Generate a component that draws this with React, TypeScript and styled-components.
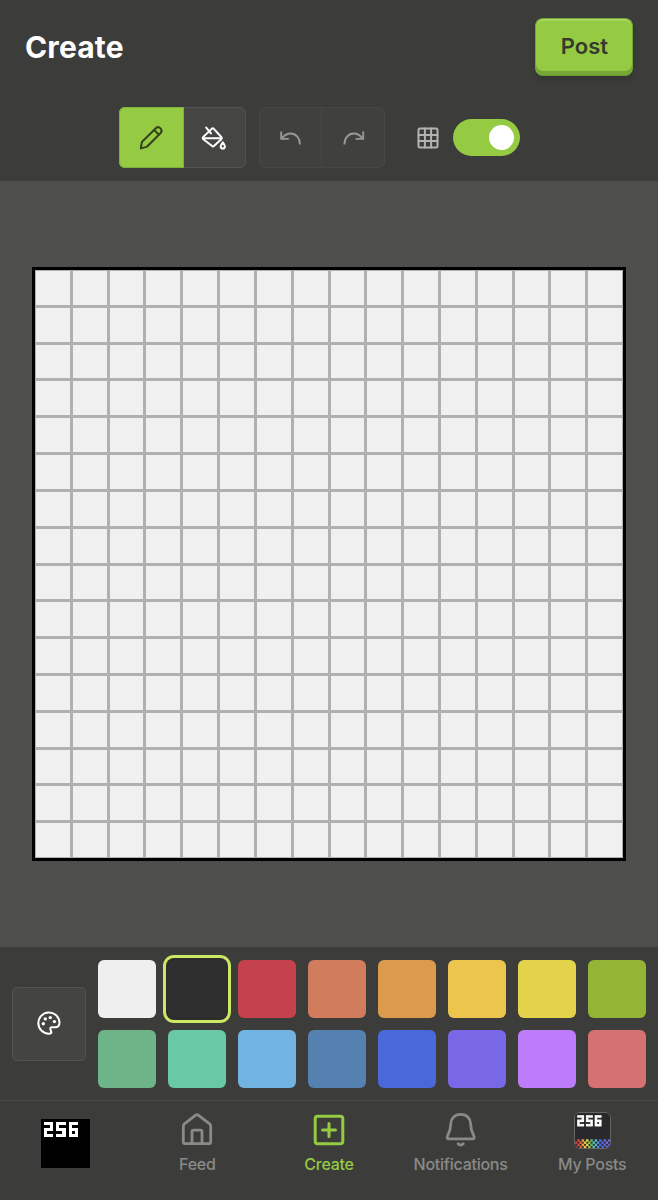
import React from "react";
import styled, { createGlobalStyle } from "styled-components";

const GlobalStyle = createGlobalStyle`
  *, *::before, *::after { box-sizing: border-box; }
  body {
    margin: 0;
    background: #3c3c3a;
    font-family: Inter, "Liberation Sans", sans-serif;
    -webkit-font-smoothing: antialiased;
  }
  button { font: inherit; padding: 0; margin: 0; cursor: pointer; }
`;

const Screen = styled.div`
  display: flex;
  flex-direction: column;
  height: 1200px;
  overflow: hidden;
  background: #3c3c3a;
`;

const Header = styled.header`
  display: flex;
  justify-content: space-between;
  align-items: flex-start;
  height: 107px;
  flex: none;
  padding: 18px 24.6px 0 25px;
`;

const Title = styled.h1`
  margin: 0;
  color: #fff;
  font-size: 30px;
  font-weight: 700;
  line-height: 58px;
  letter-spacing: 0.15px;
`;

const PostButton = styled.button`
  width: 98px;
  height: 58px;
  margin-top: 0.4px;
  padding-bottom: 2px;
  border: 1px solid #74a636;
  border-bottom-color: #6b9a33;
  border-radius: 8px;
  background: #94cb42;
  color: #363b2c;
  font-size: 22px;
  font-weight: 600;
  box-shadow: inset 0 1.5px 0 #b1da6f, inset 0 -4px 0 #75a637, 0 3px 5px rgba(0, 0, 0, 0.14);
`;

const Toolbar = styled.div`
  display: flex;
  align-items: flex-start;
  flex: none;
  height: 74px;
  padding-left: 119px;
`;

const ToolGroup = styled.div<{ $muted?: boolean }>`
  display: flex;
  height: 61px;
  width: ${(p) => (p.$muted ? "126px" : "127px")};
  margin-right: 13px;
  border: 1px solid ${(p) => (p.$muted ? "#474745" : "#535351")};
  border-radius: 6px;
  background: ${(p) => (p.$muted ? "#40403e" : "#454543")};
`;

const ToolButton = styled.button<{ $active?: boolean; $tone: string; $divided?: boolean }>`
  display: flex;
  flex: ${(p) => (p.$active ? "0 0 65px" : "1")};
  align-items: center;
  justify-content: center;
  margin: ${(p) => (p.$active ? "-1px 0 -1px -1px" : "0")};
  padding-right: ${(p) => (p.$divided ? "0" : "1px")};
  border: 0 solid #474745;
  border-right-width: ${(p) => (p.$divided ? "1px" : "0")};
  border-radius: ${(p) => (p.$active ? "6px 0 0 6px" : "0")};
  background: ${(p) => (p.$active ? "#94cb42" : "transparent")};
  box-shadow: ${(p) => (p.$active ? "inset 0 0 0 1px #7fb039" : "none")};
  color: ${(p) => p.$tone};
`;

const GridToggle = styled.div`
  display: flex;
  align-items: center;
  gap: 13.5px;
  height: 61px;
  margin-left: 19px;
  color: #b3b3b1;
`;

const Switch = styled.button`
  display: flex;
  align-items: center;
  justify-content: flex-end;
  width: 67.5px;
  height: 37px;
  padding-right: 6px;
  border: 0;
  border-radius: 19px;
  background: #94cb42;
`;

const Knob = styled.span`
  width: 25px;
  height: 25px;
  border-radius: 50%;
  background: #fff;
`;

const Stage = styled.main`
  display: flex;
  align-items: center;
  justify-content: center;
  flex: none;
  height: 766px;
  background: #4e4e4c;
`;

const Board = styled.div`
  display: grid;
  grid-template-columns: repeat(16, 1fr);
  grid-template-rows: repeat(16, 1fr);
  gap: 3px;
  width: 594px;
  height: 594px;
  padding: 1px;
  border: 3px solid #000;
  background: #b0b0ae;
`;

const Cell = styled.div`
  background: #f0f0f0;
`;

const PaletteBar = styled.section`
  display: flex;
  align-items: center;
  gap: 12px;
  flex: none;
  height: 153px;
  padding: 0 12px;
`;

const PaletteButton = styled.button`
  display: flex;
  align-items: center;
  justify-content: center;
  width: 74px;
  height: 74px;
  padding-bottom: 2px;
  border: 1px solid #535351;
  border-radius: 5px;
  background: #444442;
  color: #fff;
`;

const Swatches = styled.div`
  display: grid;
  grid-template-columns: repeat(8, 58px);
  grid-auto-rows: 58px;
  gap: 12px;
`;

const Swatch = styled.button<{ $color: string; $selected?: boolean }>`
  border: 0;
  border-radius: 6px;
  background: ${(p) => p.$color};
  box-shadow: ${(p) => (p.$selected ? "0 0 0 2px #2d2d2d, 0 0 0 5px #cce963" : "none")};
`;

const Nav = styled.nav`
  display: grid;
  grid-template-columns: repeat(5, 1fr);
  flex: none;
  height: 100px;
  border-top: 1px solid #4a4a48;
`;

const NavItem = styled.a<{ $active?: boolean }>`
  display: flex;
  flex-direction: column;
  align-items: center;
  padding-top: 11px;
  color: ${(p) => (p.$active ? "#94cb42" : "#8a8a88")};
  font-size: 16px;
  font-weight: 450;
  line-height: 20px;
`;

const NavLabel = styled.span`
  margin-top: 6px;
  letter-spacing: -0.25px;
`;

const LogoLink = styled.a`
  display: flex;
  justify-content: center;
  padding-top: 18px;
`;

const AvatarFrame = styled.span`
  display: block;
  width: 37px;
  height: 37px;
  margin-bottom: -1px;
  border: 1px solid #666664;
  border-radius: 6px;
  overflow: hidden;
  background: #29292b;
`;

const Glyph = styled.svg`
  display: block;
  flex: none;
  overflow: visible;
`;

type IconProps = { size?: number; stroke?: number; children: React.ReactNode };

const Icon = ({ size = 24, stroke = 2, children }: IconProps) => (
  <Glyph
    width={size}
    height={size}
    viewBox={`0 0 ${size} ${size}`}
    fill="none"
    stroke="currentColor"
    strokeWidth={stroke}
    strokeLinecap="round"
    strokeLinejoin="round"
    aria-hidden
  >
    {children}
  </Glyph>
);

const PencilIcon = () => (
  <Icon>
    <path d="M1.8 22.4 2.7 17q.2-1 .9-1.7L16.8 2.2a3.4 3.4 0 0 1 4.8 4.8L8.4 20.2q-.7.7-1.7.9Z" />
    <path d="m15.2 4 4.6 4.6" />
  </Icon>
);

const BucketIcon = () => (
  <Icon>
    <path d="m4.200 1.600 4.800 5.800" />
    <path d="M8 4.600 9.800 2.800q1-1 2 0L19.300 11q1 1.200 0 2.300l-7.100 6.500q-1.200 1.100-2.400 0L1.300 13.200q-1.200-1.100 0-2.300L6.300 6.100" />
    <path d="M1.200 12.300h18" />
    <path d="M20.800 16.400q-2.100 2.600-2.100 4a2.100 2.100 0 0 0 4.200 0q0-1.400-2.100-4Z" />
  </Icon>
);

const UndoIcon = () => (
  <Icon stroke={1.9}>
    <path strokeLinecap="butt" strokeLinejoin="miter" d="M2.2 5.5v7.4h7.6" />
    <path strokeLinecap="butt" d="M2.700 12.400C5.700 8.800 8.200 7.500 11.600 7.500c5.500 0 9.400 4.600 9.400 10.900" />
  </Icon>
);

const RedoIcon = () => (
  <Icon stroke={1.9}>
    <path strokeLinecap="butt" strokeLinejoin="miter" d="M22.200 5.500v7.400h-7.600" />
    <path strokeLinecap="butt" d="M21.700 12.400c-3-3.600-5.500-4.900-8.900-4.900-5.500 0-9.400 4.600-9.400 10.900" />
  </Icon>
);

const GridIcon = () => (
  <Icon size={22}>
    <rect x="1.5" y="1.5" width="19" height="19" rx="1.5" />
    <path d="M7.9 1.5v19M14.1 1.5v19M1.5 7.9h19M1.5 14.1h19" />
  </Icon>
);

const PaletteIcon = () => (
  <Icon>
    <path d="M14.2 22c-.7.6-1.5.7-2.5.7A10.6 10.6 0 1 1 22.5 11.2c0 3-1.5 5-4.2 5h-3.5c-1.2 0-1.7.8-1.4 1.9l.9 3c.1.4.1.7-.1.9Z" />
    <g fill="currentColor" stroke="none">
      <circle cx="6.3" cy="12.700" r="1.7" />
      <circle cx="8.3" cy="7.900" r="1.7" />
      <circle cx="13.3" cy="6.600" r="1.7" />
      <circle cx="17.4" cy="10.600" r="1.7" />
    </g>
  </Icon>
);

const HomeIcon = () => (
  <Icon size={36} stroke={2.8}>
    <path d="M4.3 14.2q0-1.4 1.1-2.3L16.7 3.2q1.3-1 2.6 0l11.3 8.7q1.1.9 1.1 2.3v15.500q0 2-2 2H6.3q-2 0-2-2Z" />
    <path d="M13 31.7V19.7q0-1.5 1.5-1.5h7q1.5 0 1.5 1.500v12" />
  </Icon>
);

const AddIcon = () => (
  <Icon size={36} stroke={3}>
    <rect x="4.2" y="4.2" width="27.6" height="27.6" rx="2.5" />
    <path d="M18 11.5v13M11.5 18h13" />
  </Icon>
);

const BellIcon = () => (
  <Icon size={36} stroke={2.8}>
    <path d="M17.700 2.300c-6 0-9.700 4-9.900 9.300-.2 7.200-1.200 8.400-3.200 12-.9 1.700-.4 3.300 1.400 3.300h23.400c1.800 0 2.300-1.600 1.400-3.300-2-3.600-3-4.800-3.200-12C27.400 6.300 23.700 2.300 17.700 2.300Z" />
    <path d="M15.100 31.800q2.600 2.600 5.200 0" />
  </Icon>
);

const NUMERAL_ROWS = [
  "................",
  ".###.###.###....",
  "...#.#...#......",
  ".###.###.###....",
  ".#.....#.#.#....",
  ".###.###.###....",
];

const RAINBOW = ["#c93a3f", "#d9443c", "#e0603f", "#ee9a40", "#ecc24b", "#e3d44b", "#9cc23e", "#62b678", "#57bfa6", "#5cabe0", "#4a88e0", "#4a68da", "#5a5fe0", "#5b65e0", "#7868e6", "#5a68da"];

const PixelArt = ({ size, rainbow }: { size: number; rainbow?: boolean }) => (
  <svg width={size} height={size} viewBox="0 0 16 16" shapeRendering={rainbow ? "auto" : "crispEdges"} role="img" aria-label="256">
    <rect width="16" height="16" fill={rainbow ? "#29292b" : "#000"} />
    {NUMERAL_ROWS.flatMap((row, y) =>
      row.split("").map((c, x) =>
        c === "#" ? <rect key={`${x}-${y}`} x={x} y={y} width={rainbow ? 1.15 : 1.02} height={rainbow ? 1.15 : 1.02} fill="#fff" /> : null
      )
    )}
    {rainbow &&
      [12, 13, 14, 15].flatMap((y) =>
        RAINBOW.map((fill, x) =>
          (x + y) % 2 === 1 ? <rect key={`r${x}-${y}`} x={x} y={y} width="1.15" height="1.15" fill={fill} /> : null
        )
      )}
  </svg>
);

const COLORS = [
  "#efefef", "#2f2f2f", "#c5424c", "#d07c5d", "#dc9b4c", "#ecc54e", "#e3d34b", "#94b436",
  "#6db489", "#69c8a5", "#71b4e2", "#5581b1", "#4a68da", "#7868e6", "#bd7dfb", "#d57170",
];

const CELLS = Array.from({ length: 256 }, (_, i) => i);

export default function App() {
  return (
    <Screen>
      <GlobalStyle />
      <Header>
        <Title>Create</Title>
        <PostButton>Post</PostButton>
      </Header>
      <Toolbar>
        <ToolGroup>
          <ToolButton $active $tone="#34421e" aria-label="Draw"><PencilIcon /></ToolButton>
          <ToolButton $tone="#ffffff" aria-label="Fill"><BucketIcon /></ToolButton>
        </ToolGroup>
        <ToolGroup $muted>
          <ToolButton $divided $tone="#989896" aria-label="Undo"><UndoIcon /></ToolButton>
          <ToolButton $tone="#989896" aria-label="Redo"><RedoIcon /></ToolButton>
        </ToolGroup>
        <GridToggle>
          <GridIcon />
          <Switch role="switch" aria-checked="true" aria-label="Grid"><Knob /></Switch>
        </GridToggle>
      </Toolbar>
      <Stage>
        <Board>{CELLS.map((i) => <Cell key={i} />)}</Board>
      </Stage>
      <PaletteBar>
        <PaletteButton aria-label="Palettes"><PaletteIcon /></PaletteButton>
        <Swatches>
          {COLORS.map((color, i) => <Swatch key={color} $color={color} $selected={i === 1} aria-label={color} />)}
        </Swatches>
      </PaletteBar>
      <Nav>
        <LogoLink><PixelArt size={49} /></LogoLink>
        <NavItem><HomeIcon /><NavLabel>Feed</NavLabel></NavItem>
        <NavItem $active><AddIcon /><NavLabel>Create</NavLabel></NavItem>
        <NavItem><BellIcon /><NavLabel>Notifications</NavLabel></NavItem>
        <NavItem>
          <AvatarFrame><PixelArt size={35} rainbow /></AvatarFrame>
          <NavLabel>My Posts</NavLabel>
        </NavItem>
      </Nav>
    </Screen>
  );
}
